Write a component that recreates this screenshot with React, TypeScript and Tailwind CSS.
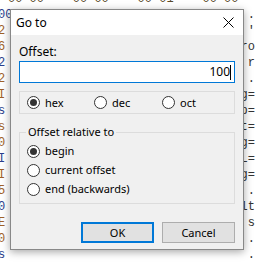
const rows = [
  { l: "00", r: "." },
  { l: "2", r: "'" },
  { l: "6", r: "ro" },
  { l: "2", r: "r" },
  { l: "2", r: "." },
  { l: "I", r: "g=" },
  { l: "s", r: "p=" },
  { l: "s", r: "t=" },
  { l: "0", r: "g=" },
  { l: "I", r: "L=" },
  { l: "I", r: "g=" },
  { l: "5", r: "." },
  { l: "0", r: "lt" },
  { l: "E", r: "s" },
  { l: "0", r: "." },
  { l: "s", r: "." },
];

const Radio = ({ checked, label }: { checked?: boolean; label: string }) => (
  <label className="flex items-center gap-[5px] leading-[16px]">
    <span className="w-[13px] h-[13px] rounded-full border border-[#333] bg-white flex items-center justify-center">
      {checked && <span className="w-[7px] h-[7px] rounded-full bg-[#333]" />}
    </span>
    <span>{label}</span>
  </label>
);

export default function App() {
  return (
    <div className="relative w-[256px] h-[263px] overflow-hidden bg-white font-['Liberation_Mono',monospace] text-[12px]">
      <div className="flex flex-col -mt-[9px]">
        <div className="h-[16px] leading-[16px] pl-[8px] text-[#5a4a2a] whitespace-pre">
          00 00    00 00    00 01    00 00
        </div>
        {rows.map((r, i) => (
          <div key={i} className="h-[16px] leading-[16px] flex justify-between -ml-[2px] pr-[1px]">
            <span className={i % 3 === 0 ? "text-[#2b3e8c]" : "text-[#a0622a]"}>{r.l}</span>
            <span className="text-[#333]">{r.r}</span>
          </div>
        ))}
        <div className="h-[16px] leading-[16px] pl-[8px] text-[#5a4a2a] whitespace-pre">
          00 10    00 00    00 00    00 00      0
        </div>
      </div>

      <div className="absolute left-[10px] top-[9px] w-[234px] h-[241px] border border-[#888] bg-[#f0f0f0] shadow-[0_2px_8px_rgba(0,0,0,0.35)] font-['Noto_Sans',sans-serif] text-[11px] leading-[16px] text-black flex flex-col">
        <div className="h-[25px] bg-white flex items-center justify-between pl-[5px] pr-[9px]">
          <span className="text-[12px]">Go to</span>
          <svg width="11" height="11" viewBox="0 0 11 11" stroke="#000" strokeWidth="1">
            <path d="M0.5 0.5L10.5 10.5M10.5 0.5L0.5 10.5" />
          </svg>
        </div>
        <div className="flex flex-col px-[8px] pt-[9px]">
          <span className="text-[12px]">Offset:</span>
          <div className="mt-[1px] h-[22px] border border-[#0078d7] bg-white flex items-center justify-end pr-[3px]">
            <span className="leading-[14px] text-[12px]">100</span>
            <span className="w-px h-[15px] bg-black" />
          </div>
          <div className="mt-[8px] h-[23px] border border-[#dcdcdc] flex items-center pl-[7px]">
            <div className="w-[67px]"><Radio checked label="hex" /></div>
            <div className="w-[68px]"><Radio label="dec" /></div>
            <Radio label="oct" />
          </div>
          <div className="relative mt-[18px] h-[72px] border border-[#dcdcdc] flex flex-col gap-[3px] pt-[10px] pl-[7px]">
            <span className="absolute -top-[9px] left-[6px] px-[2px] bg-[#f0f0f0]">Offset relative to</span>
            <Radio checked label="begin" />
            <Radio label="current offset" />
            <Radio label="end (backwards)" />
          </div>
          <div className="mt-[18px] flex justify-end gap-[8px]">
            <button className="w-[73px] h-[21px] border-2 border-[#0078d7] bg-[#e1e1e1] leading-none">OK</button>
            <button className="w-[73px] h-[21px] border border-[#adadad] bg-[#e1e1e1] leading-none">Cancel</button>
          </div>
        </div>
      </div>
    </div>
  );
}
